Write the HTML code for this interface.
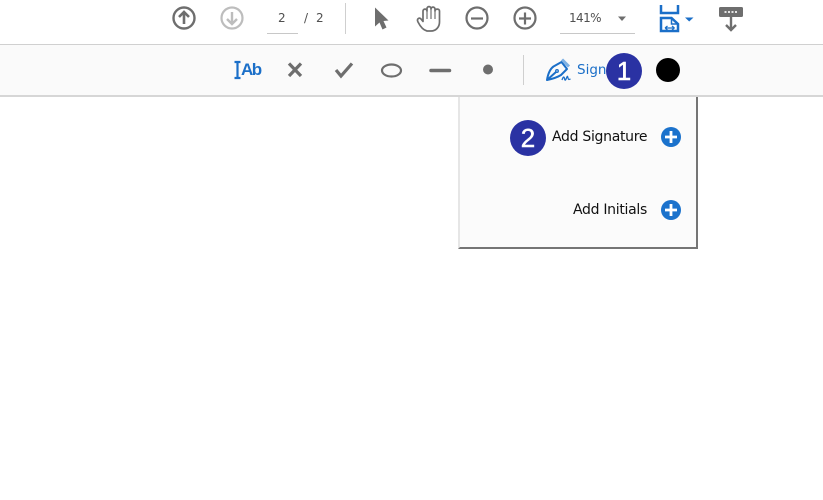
<!DOCTYPE html>
<html>
<head>
<meta charset="utf-8">
<style>
html,body{margin:0;padding:0;background:#fff;}
body{width:823px;height:500px;position:relative;overflow:hidden;font-family:"Liberation Sans",sans-serif;}
.abs{position:absolute;}
.t{position:absolute;white-space:nowrap;font-family:"DejaVu Sans","Liberation Sans",sans-serif;}
.n{position:absolute;width:36px;height:36px;border-radius:50%;background:#2a32a3;color:#fff;font-size:26px;line-height:36px;text-align:center;-webkit-text-stroke:.5px #fff;}
</style>
</head>
<body>
<div class="abs" style="left:0;top:0;width:823px;height:44px;background:#fff;"></div>
<div class="abs" style="left:0;top:44px;width:823px;height:1px;background:#d0d0d0;"></div>
<div class="abs" style="left:0;top:45px;width:823px;height:51px;background:#fafafa;"></div>
<div class="abs" style="left:0;top:95px;width:823px;height:2px;background:#d6d6d6;"></div>

<svg class="abs" style="left:0;top:0" width="823" height="100" viewBox="0 0 823 100" fill="none">
  <g stroke="#6e6e6e" stroke-width="2.4">
    <circle cx="184" cy="18" r="10.5"/>
    <path d="M184 24V12.5M179 17l5-5 5 5" stroke-width="2.6"/>
  </g>
  <g stroke="#bdbdbd" stroke-width="2.2">
    <circle cx="232" cy="18" r="10.5"/>
    <path d="M232 12v11.5M227 19l5 5 5-5" stroke-width="2.4"/>
  </g>
  <path d="M267 33.5H298" stroke="#c8c8c8"/>
  <path d="M345.500 3V34" stroke="#cfcfcf"/>
  <path d="M375 7.500L388.500 20.500L383.500 21L386.500 27.500L382.500 29.500L379.500 22.500L375 26.500Z" fill="#6e6e6e"/>
  <path d="M427 31C423 30 420 26 418 22C416.500 19 419 17 421 19L423 21.500V11C423 8.500 427 8.500 427 11V8.500C427 6 431 6 431 8.500V9C431 6.500 435 6.500 435 9V11C435 8.500 439.500 8.500 439.500 11V22C439.500 27 436 31 431 31Z" stroke="#6e6e6e" stroke-width="1.700" stroke-linejoin="round"/>
  <path d="M427 11V19M431 9V19M435 11V19" stroke="#6e6e6e" stroke-width="1.200"/>
  <g stroke="#6e6e6e" stroke-width="2.200">
    <circle cx="477" cy="18" r="10.500"/>
    <path d="M471 18.500H483"/>
    <circle cx="525" cy="18" r="10.500"/>
    <path d="M519 18.500H531M525 12.500V24.500"/>
  </g>
  <path d="M560 33.500H635" stroke="#c8c8c8"/>
  <path d="M618 16.500H626L622 21z" fill="#6e6e6e"/>
  <g stroke="#1b6fc8" stroke-width="2.500" fill="none">
    <path d="M661 5V13H678V5"/>
    <path d="M661 31V18H671.500L678 24V31H661Z"/>
    <path d="M671.500 18V24H678" stroke-width="1.500"/>
  </g>
  <path d="M665 28H674.500M665 28l2.500-2M665 28l2.500 2M674.500 28l-2.500-2M674.500 28l-2.500 2" stroke="#1b6fc8" stroke-width="1.300"/>
  <path d="M685 17.500H693.500L689.200 21.500z" fill="#1b6fc8"/>
  <rect x="719" y="7" width="24" height="10" rx="1.500" fill="#6e6e6e"/>
  <path d="M724.500 12H738" stroke="#e4e4e4" stroke-width="2" stroke-dasharray="2 1.500"/>
  <path d="M731 16V30M726 25l5 5 5-5" stroke="#6e6e6e" stroke-width="2.400"/>

  <path d="M234.500 62H240.500M234.500 78H240.500M237.500 62V78" stroke="#1b6fc8" stroke-width="2.200"/>
  <path d="M289 63.500L301 76M301 63.500L289 76" stroke="#6e6e6e" stroke-width="3.200"/>
  <path d="M336 70l5 6L352 63.500" stroke="#6e6e6e" stroke-width="3.200"/>
  <ellipse cx="391.500" cy="70.500" rx="9.500" ry="6" stroke="#6e6e6e" stroke-width="2.200"/>
  <path d="M431 70.500H449.500" stroke="#6e6e6e" stroke-width="3.500" stroke-linecap="round"/>
  <circle cx="488" cy="69.500" r="5" fill="#6e6e6e"/>
  <path d="M523.500 55V85" stroke="#cfcfcf"/>
  <g stroke="#1b6fc8" stroke-width="2" stroke-linejoin="round">
    <path d="M547 80C548 74 550 69 553.500 66.500L561.500 62L567 69L561 75C557 77.500 552 79 547 80Z"/>
    <path d="M547 80L556 72"/>
    <circle cx="557" cy="71" r="1.300" stroke-width="1.300"/>
    <path d="M562 59.500L569 66.500" stroke="#7fb1e3" stroke-width="3"/>
    <path d="M562 80c1-3 2-4 2.500-1.500s1 2 2-.5 1-2 1.500 0 1 1.500 2.500 1" stroke-width="1.300"/>
  </g>
</svg>

<div class="t" style="left:278px;top:11px;font-size:12px;color:#505050;line-height:14px;">2</div>
<div class="t" style="left:304px;top:11px;font-size:12px;color:#505050;line-height:14px;">/</div>
<div class="t" style="left:316px;top:11px;font-size:12px;color:#505050;line-height:14px;">2</div>
<div class="t" style="left:569px;top:11px;font-size:12px;color:#505050;line-height:14px;letter-spacing:-.6px;">141%</div>
<div class="abs" style="left:241px;top:61px;font-size:17px;font-weight:bold;color:#1b6fc8;line-height:18px;letter-spacing:-1.500px;white-space:nowrap;">Ab</div>
<div class="t" style="left:577px;top:62px;font-size:13.500px;color:#1b6fc8;line-height:17px;">Sign</div>

<div class="n" style="left:606px;top:53px;">1</div>
<div class="abs" style="left:656px;top:58px;width:24px;height:24px;border-radius:50%;background:#000;"></div>

<div class="abs" style="left:458px;top:97px;height:150px;background:#fbfbfb;border-left:2px solid #e6e6e6;border-right:2px solid #757575;border-bottom:2px solid #757575;box-sizing:content-box;width:236px;"></div>

<div class="t" style="left:552px;top:128px;font-size:14px;color:#111;line-height:18px;letter-spacing:-.3px;">Add Signature</div>
<div class="t" style="left:573px;top:201px;font-size:14px;color:#111;line-height:18px;letter-spacing:-.3px;">Add Initials</div>
<div class="n" style="left:510px;top:120px;">2</div>

<svg class="abs" style="left:0;top:0" width="823" height="260" viewBox="0 0 823 260" fill="none">
  <circle cx="671" cy="137" r="10" fill="#1b72cc"/>
  <path d="M665 137H677M671 131V143" stroke="#fff" stroke-width="2.800"/>
  <circle cx="671" cy="210" r="10" fill="#1b72cc"/>
  <path d="M665 210H677M671 204V216" stroke="#fff" stroke-width="2.800"/>
</svg>
</body>
</html>
